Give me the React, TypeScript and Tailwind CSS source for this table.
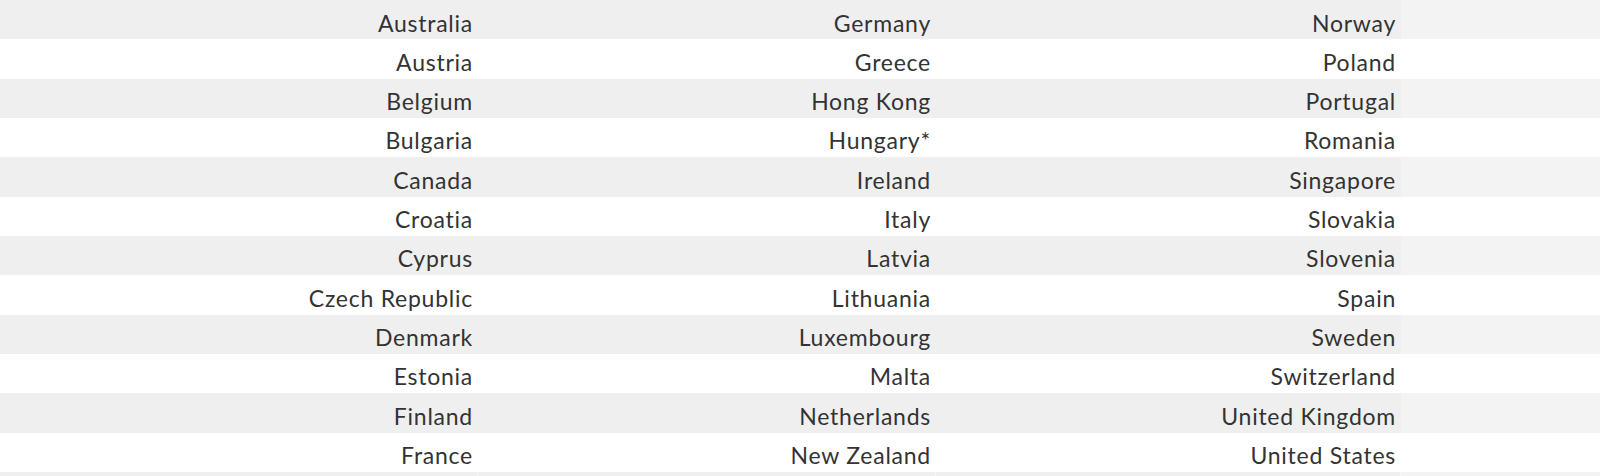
import React from 'react'

const rows: [string, string, string][] = [
    ['Australia', 'Germany', 'Norway'],
    ['Austria', 'Greece', 'Poland'],
    ['Belgium', 'Hong Kong', 'Portugal'],
    ['Bulgaria', 'Hungary*', 'Romania'],
    ['Canada', 'Ireland', 'Singapore'],
    ['Croatia', 'Italy', 'Slovakia'],
    ['Cyprus', 'Latvia', 'Slovenia'],
    ['Czech Republic', 'Lithuania', 'Spain'],
    ['Denmark', 'Luxembourg', 'Sweden'],
    ['Estonia', 'Malta', 'Switzerland'],
    ['Finland', 'Netherlands', 'United Kingdom'],
    ['France', 'New Zealand', 'United States'],
]

const cell = "h-[39.33px] pt-[7.5px] pr-[5px] text-right leading-[31.33px] whitespace-nowrap"

export default function App() {
    return (
        <div className="w-[1600px] h-[476px] overflow-hidden bg-white text-[23px] tracking-[0.75px] text-[#333333] font-['Lato','Liberation_Sans',sans-serif]">
            {rows.map((r, i) => {
                const odd = i % 2 === 0
                return (
                    <div key={i} className={`flex ${odd ? 'bg-[#f3f3f3]' : 'bg-white'}`}>
                        <div className={`w-[478px] ${cell} ${odd ? 'bg-[#efefef]' : ''}`}>{r[0]}</div>
                        <div className={`w-[458px] ${cell} ${odd ? 'bg-[#efefef]' : ''}`}>{r[1]}</div>
                        <div className={`w-[465px] ${cell} ${odd ? 'bg-[#efefef]' : ''}`}>{r[2]}</div>
                        <div className="flex-1" />
                    </div>
                )
            })}
            <div className="flex h-[8px] bg-[#f3f3f3]">
                <div className="w-[478px] bg-[#efefef] border-r border-[#f7f7f7]" />
                <div className="w-[458px] bg-[#efefef] border-r border-[#f7f7f7]" />
                <div className="w-[465px] bg-[#efefef] border-r border-[#f7f7f7]" />
                <div className="flex-1" />
            </div>
        </div>
    )
}
